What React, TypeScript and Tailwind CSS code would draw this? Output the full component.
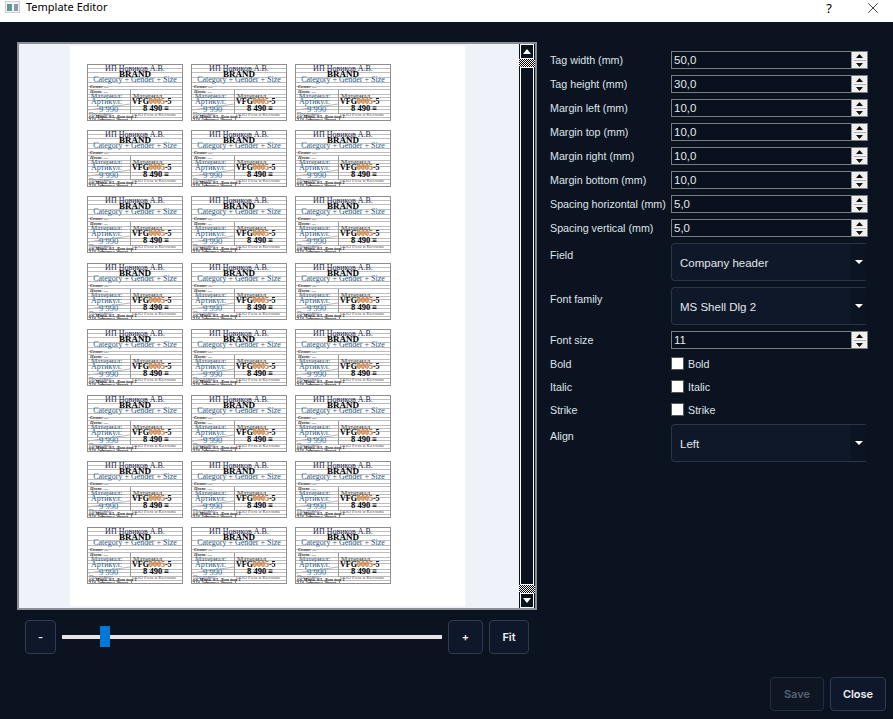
import React from 'react';
import { X } from 'lucide-react';

const ROWS = [4, 4, 5, 5, 4, 3, 5, 3, 3, 6, 3, 4, 4, 3];
const TAG_COUNT = 24;

const Tag: React.FC = () => (
  <div className="relative w-[96px] h-[57px] border border-[#8e8e8e] bg-white overflow-hidden font-['Liberation_Serif',serif] whitespace-nowrap leading-none">
    {ROWS.map((h, i) => (
      <div key={i} className="border-b border-[#bdbdbd]" style={{ height: h }} />
    ))}
    <div className="absolute left-[42px] top-[25px] h-[24px] w-px bg-[#9a9a9a]" />
    <svg className="absolute left-0 top-[30px]" width="42" height="16" viewBox="0 0 42 16">
      <path d="M0 15 L42 9" stroke="#b5b5b5" strokeWidth="1" />
    </svg>

    {/* header */}
    <div className="absolute inset-x-0 top-0 text-center text-[8px] text-[#26264a]">ИП Новиков А.В.</div>
    <div className="absolute inset-x-0 top-[5px] text-center text-[9px] font-bold text-black">BRAND</div>
    <div className="absolute inset-x-0 top-[11px] text-center text-[8px] text-[#2a5a85]">Category + Gender + Size</div>
    <div className="absolute left-[2px] top-[20px] text-[4.5px] font-bold italic text-[#333]">Сезон: —</div>
    <div className="absolute left-[2px] top-[25px] text-[4.5px] font-bold italic text-[#333]">Цвет: —</div>

    {/* left cell */}
    <div className="absolute left-[3px] top-[28px] text-[7px] text-[#2c5070]">Материал:</div>
    <div className="absolute left-[3px] top-[33px] text-[8px] text-[#2a5a85]">Артикул:</div>
    <div className="absolute left-[11px] top-[40px] text-[8.5px] text-[#2a6a9a]">9 990</div>

    {/* right cell */}
    <div className="absolute left-[45px] top-[28px] text-[7px] text-[#333]">Материал</div>
    <div className="absolute left-[44px] top-[33px] text-[8px] font-bold text-black">
      VFG<span className="text-[#c26a10]">0005</span>-5
    </div>
    <div className="absolute left-[55px] top-[39px] text-[8.5px] font-bold text-black">8 490 ≡</div>

    {/* footer */}
    <div className="absolute left-[1px] top-[47px] text-[5.5px] text-[#5a5a7a]">Продавец:</div>
    <div className="absolute left-[44px] top-[47px] text-[5px] text-[#6a5a6a]">ООО Роза и Козлова</div>
    <div className="absolute left-[1px] top-[50px] text-[4.5px] font-bold italic text-[#222]">ул. Мира, д.1, Дом дом 1</div>
    <div className="absolute left-[1px] top-[53px] text-[4.5px] font-bold italic text-[#222]">123 Артикул, бренд, 1</div>
  </div>
);

const Checker: React.FC = () => (
  <div className="h-[8px] bg-[repeating-conic-gradient(#000_0_25%,#fff_0_50%)] bg-[length:2px_2px]" />
);

const ScrollButton: React.FC<{ down?: boolean }> = ({ down }) => (
  <div className="h-[15px] mx-px bg-[#0b1320] border border-white flex items-center justify-center">
    <svg width="8" height="5" viewBox="0 0 8 5">
      <path d={down ? 'M0 0H8L4 5Z' : 'M4 0L8 5H0Z'} fill="#fff" />
    </svg>
  </div>
);

const SpinBox: React.FC<{ value: string }> = ({ value }) => (
  <div className="w-[197px] h-[18px] border border-[#7d7d7d] bg-[#0a111e] flex items-center">
    <span className="flex-1 pl-[2px] pt-px text-[#e4e7ec] text-[11.5px]">{value}</span>
    <div className="w-[16px] h-[16px] bg-[#f0f0f0] flex flex-col items-center justify-center gap-[2px] border-l border-[#9a9a9a]">
      <svg width="7" height="4" viewBox="0 0 7 4"><path d="M3.5 0L7 4H0Z" fill="#111" /></svg>
      <div className="w-[12px] h-px bg-[#b5b5b5]" />
      <svg width="7" height="4" viewBox="0 0 7 4"><path d="M0 0H7L3.5 4Z" fill="#111" /></svg>
    </div>
  </div>
);

const Combo: React.FC<{ value: string }> = ({ value }) => (
  <div className="w-[197px] h-[38px] rounded-[4px] border border-[#2a3547] border-r-[#0a0f18] bg-[#0e1829] flex items-center overflow-hidden">
    <span className="flex-1 pl-[8px] pt-[3px] text-[#e4e7ec] text-[11.5px]">{value}</span>
    <div className="w-[16px] h-full bg-[#0c1424] flex items-center justify-center">
      <svg width="8" height="4" viewBox="0 0 8 4"><path d="M0 0H8L4 4Z" fill="#fff" /></svg>
    </div>
  </div>
);

const SpinRow: React.FC<{ label: string; value: string }> = ({ label, value }) => (
  <div className="flex items-center h-[18px]">
    <span className="w-[121px] pt-px text-[#dfe3e9] whitespace-nowrap">{label}</span>
    <SpinBox value={value} />
  </div>
);

const ComboRow: React.FC<{ label: string; value: string }> = ({ label, value }) => (
  <div className="flex items-start">
    <span className="w-[121px] pt-[3px] leading-[18px] text-[#dfe3e9]">{label}</span>
    <Combo value={value} />
  </div>
);

const CheckRow: React.FC<{ label: string }> = ({ label }) => (
  <div className="flex items-center h-[13px]">
    <span className="w-[121px] pt-px text-[#dfe3e9]">{label}</span>
    <div className="w-[13px] h-[13px] bg-white border border-[#555]" />
    <span className="ml-[4px] pt-px text-[#dfe3e9]">{label}</span>
  </div>
);

const ToolButton: React.FC<{ label: string; className: string; muted?: boolean }> = ({ label, className, muted }) => (
  <button
    className={`h-[34px] rounded-[4px] border flex items-center justify-center font-['Inter',sans-serif] text-[11px] font-semibold ${
      muted ? 'border-[#222c3b] bg-[#0e1624] text-[#566273]' : 'border-[#2f3b4e] bg-[#0e182a] text-[#eef1f5]'
    } ${className}`}
  >
    {label}
  </button>
);

export default function App() {
  return (
    <div className="w-[893px] h-[719px] flex flex-col bg-[#0b1320] font-['Liberation_Sans',sans-serif] text-[10.7px] overflow-hidden">
      {/* Title bar */}
      <div className="h-[22px] bg-white flex items-center text-black font-['Noto_Sans',sans-serif]">
        <svg className="ml-[5px] mb-[9px]" width="15" height="12" viewBox="0 0 15 12">
          <rect width="15" height="12" fill="#cfcfcf" />
          <rect x="1" y="1" width="13" height="10" fill="#f2f2f2" />
          <rect x="2" y="3" width="5" height="7" fill="#5d9a8c" />
          <rect x="9" y="3" width="4" height="7" fill="#8a97a5" />
        </svg>
        <span className="ml-[6px] mb-[9px] text-[11px] leading-none">Template Editor</span>
        <span className="ml-auto mb-[6px] text-[13px] leading-none">?</span>
        <X className="ml-[32px] mr-[11px] mb-[6px]" size={18} strokeWidth={1} color="#000" />
      </div>

      <div className="flex-1 flex min-h-0">
        {/* Preview */}
        <div className="ml-[17px] mt-[20px] w-[520px] flex flex-col">
          <div className="h-[568px] border-2 border-[#8b9096] flex bg-[#eff3f9]">
            <div className="flex-1 pt-px pl-[50px]">
              <div className="w-[397px] h-[562px] bg-white border border-[#f2f4f8] pl-[17px] pt-[18px]">
                <div className="grid grid-cols-[96px_96px_96px] gap-x-[8px] gap-y-[9.2px]">
                  {Array.from({ length: TAG_COUNT }).map((_, i) => (
                    <Tag key={i} />
                  ))}
                </div>
              </div>
            </div>
            <div className="w-[16px] bg-[#0b1320] flex flex-col">
              <ScrollButton />
              <Checker />
              <div className="flex-1 mx-px border border-white bg-[#0b1320]" />
              <Checker />
              <ScrollButton down />
            </div>
          </div>

          {/* Zoom controls */}
          <div className="mt-[10px] ml-[8px] w-[504px] flex items-center">
            <ToolButton label="-" className="w-[31px]" />
            <div className="relative ml-[6px] w-[380px] h-[4px] bg-[#e6e6e6]">
              <div className="absolute left-[38px] top-[-9px] w-[10px] h-[21px] bg-[#0078d7]" />
            </div>
            <ToolButton label="+" className="ml-[6px] w-[35px]" />
            <ToolButton label="Fit" className="ml-[6px] w-[40px]" />
          </div>
        </div>

        {/* Settings */}
        <div className="ml-[13px] mt-[29px] w-[318px] flex flex-col">
          <div className="flex flex-col gap-[6px]">
            <SpinRow label="Tag width (mm)" value="50,0" />
            <SpinRow label="Tag height (mm)" value="30,0" />
            <SpinRow label="Margin left (mm)" value="10,0" />
            <SpinRow label="Margin top (mm)" value="10,0" />
            <SpinRow label="Margin right (mm)" value="10,0" />
            <SpinRow label="Margin bottom (mm)" value="10,0" />
            <SpinRow label="Spacing horizontal (mm)" value="5,0" />
            <SpinRow label="Spacing vertical (mm)" value="5,0" />
            <ComboRow label="Field" value="Company header" />
            <ComboRow label="Font family" value="MS Shell Dlg 2" />
            <SpinRow label="Font size" value="11" />
          </div>
          <div className="mt-[8px] flex flex-col gap-[10px]">
            <CheckRow label="Bold" />
            <CheckRow label="Italic" />
            <CheckRow label="Strike" />
          </div>
          <div className="mt-[8px]">
            <ComboRow label="Align" value="Left" />
          </div>
        </div>
      </div>

      {/* Footer */}
      <div className="h-[42px] flex justify-end gap-[6px] pr-[7px]">
        <ToolButton label="Save" className="w-[54px]" muted />
        <ToolButton label="Close" className="w-[56px]" />
      </div>
    </div>
  );
}
